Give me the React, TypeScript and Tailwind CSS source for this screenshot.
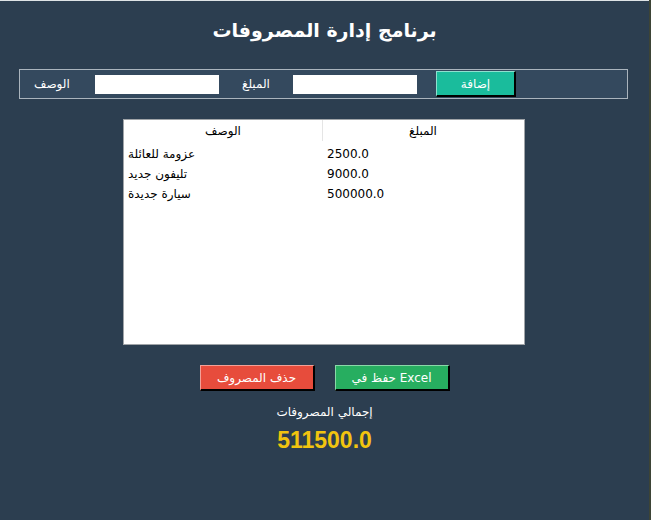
import React from 'react';

const expenses = [
  { desc: 'عزومة للعائلة', amount: '2500.0' },
  { desc: 'تليفون جديد', amount: '9000.0' },
  { desc: 'سيارة جديدة', amount: '500000.0' },
];

const ar = { fontFamily: '"DejaVu Sans", "Noto Sans", sans-serif' };

export default function App() {
  return (
    <div className="relative w-[651px] h-[520px] overflow-hidden bg-[#2c3e50] text-white" style={ar}>
      {/* window edge */}
      <div className="absolute top-0 left-0 w-full h-px bg-[#dfe3e6]" />
      <div className="absolute top-0 right-0 w-[2px] h-full bg-[#3d4436]" />

      <div className="flex flex-col w-[649px]">
        {/* Title */}
        <div className="h-[60px] flex items-center justify-center">
          <h1 className="text-[19px] font-bold leading-none" dir="rtl">برنامج إدارة المصروفات</h1>
        </div>

        {/* Input bar */}
        <div className="mt-[9px] ml-[19px] w-[609px] h-[30px] border border-[#aab4bd] bg-[#34495e] flex items-center text-[12px]">
          <div className="w-[75px] pl-[14px] text-left">
            <span dir="rtl">الوصف</span>
          </div>
          <input className="w-[124px] h-[19px] bg-white outline-none text-black px-1" />
          <div className="w-[74px] pl-[23px] text-left">
            <span dir="rtl">المبلغ</span>
          </div>
          <input className="w-[124px] h-[19px] bg-white outline-none text-black px-1" />
          <button className="ml-[19px] w-[80px] h-[26px] bg-[#1abc9c] border-t border-l border-[#8fe0cf] border-b-2 border-r-2 border-b-black border-r-black text-[12px]">
            إضافة
          </button>
        </div>

        {/* Table */}
        <div className="mt-[20px] ml-[123px] w-[402px] h-[226px] border border-[#a0a4a8] bg-white text-black text-[12px]">
          <div className="flex h-[21px] items-center">
            <div className="w-[199px] h-full flex items-center justify-center border-r border-[#e5e5e5]">الوصف</div>
            <div className="w-[200px] h-full flex items-center justify-center">المبلغ</div>
          </div>
          <div className="pt-[3px]">
            {expenses.map((e) => (
              <div key={e.amount} className="flex h-[20px] items-center">
                <div className="w-[199px] pl-[4px] text-left">
                  <span dir="rtl">{e.desc}</span>
                </div>
                <div className="w-[200px] pl-[4px]">{e.amount}</div>
              </div>
            ))}
          </div>
        </div>

        {/* Actions */}
        <div className="mt-[20px] flex justify-center gap-[20px] text-[12px]">
          <button className="w-[115px] h-[26px] bg-[#e74c3c] border-t border-l border-[#f3a097] border-b-2 border-r-2 border-b-black border-r-black" dir="rtl">
            حذف المصروف
          </button>
          <button className="w-[115px] h-[26px] bg-[#27ae60] border-t border-l border-[#8ad8a8] border-b-2 border-r-2 border-b-black border-r-black" dir="ltr">
            حفظ في Excel
          </button>
        </div>

        {/* Total */}
        <div className="mt-[12px] flex justify-center text-[12px]" dir="rtl">إجمالي المصروفات</div>
        <div
          className="mt-[8px] flex justify-center text-[23px] font-bold text-[#f1c40f] leading-none"
          style={{ fontFamily: '"Liberation Sans", Arial, sans-serif' }}
        >
          511500.0
        </div>
      </div>
    </div>
  );
}
